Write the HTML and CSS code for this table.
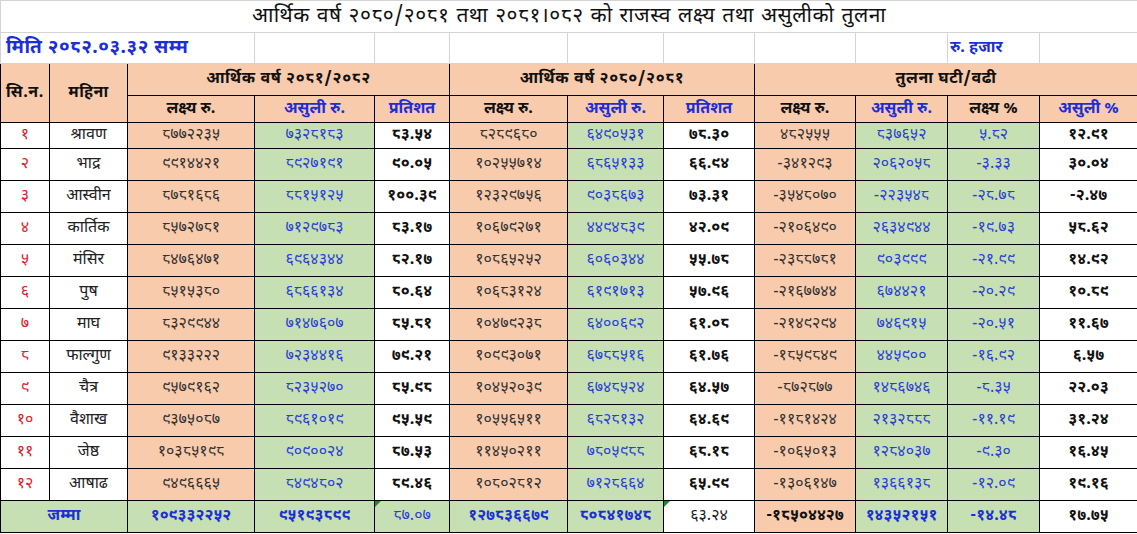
FILE: index.html
```html
<!DOCTYPE html>
<html lang="ne">
<head>
<meta charset="utf-8">
<title>राजस्व लक्ष्य तथा असुलीको तुलना</title>
<link rel="stylesheet" href="styles.css">
</head>
<body>
<table class="sheet">
  <colgroup>
    <col class="c1"><col class="c2"><col class="c3"><col class="c4"><col class="c5"><col class="c6">
    <col class="c7"><col class="c8"><col class="c9"><col class="c10"><col class="c11"><col class="c12">
  </colgroup>
  <tr class="r-title">
    <td colspan="12" class="title">आर्थिक वर्ष २०८०/२०८१ तथा २०८१।०८२ को राजस्व लक्ष्य तथा असुलीको तुलना</td>
  </tr>
  <tr class="r-date">
    <td colspan="3" class="date">मिति २०८२.०३.३२ सम्म</td>
    <td class="grid"></td><td class="grid"></td><td class="grid"></td><td class="grid"></td><td class="grid"></td>
    <td class="grid"></td><td class="grid"></td><td class="grid unit">रु. हजार</td><td class="grid"></td>
  </tr>
  <tr class="r-h1">
    <th rowspan="2" class="hd">सि.न.</th>
    <th rowspan="2" class="hd">महिना</th>
    <th colspan="3" class="hd">आर्थिक वर्ष २०८१/२०८२</th>
    <th colspan="3" class="hd">आर्थिक वर्ष २०८०/२०८१</th>
    <th colspan="4" class="hd">तुलना घटी/वढी</th>
  </tr>
  <tr class="r-h2">
    <th class="hd">लक्ष्य रु.</th><th class="hd blue">असुली रु.</th><th class="hd blue">प्रतिशत</th>
    <th class="hd">लक्ष्य रु.</th><th class="hd blue">असुली रु.</th><th class="hd blue">प्रतिशत</th>
    <th class="hd">लक्ष्य रु.</th><th class="hd blue">असुली रु.</th><th class="hd">लक्ष्य %</th><th class="hd blue">असुली %</th>
  </tr>
  <tr class="r-first">
    <td class="sn">१</td><td class="mo">श्रावण</td><td class="pe">८७७२२३५</td><td class="gr">७३२८१८३</td><td class="pc">८३.५४</td>
    <td class="pe">८२८९६८०</td><td class="gr">६४९०५३१</td><td class="pc">७८.३०</td>
    <td class="pe">४८२५५५</td><td class="gr">८३७६५२</td><td class="gr">५.८२</td><td class="pc">१२.९१</td>
  </tr>
  <tr>
    <td class="sn">२</td><td class="mo">भाद्र</td><td class="pe">९९१४४२१</td><td class="gr">८९२७१९१</td><td class="pc">९०.०५</td>
    <td class="pe">१०२५५७१४</td><td class="gr">६८६५१३३</td><td class="pc">६६.९४</td>
    <td class="pe">-३४१२९३</td><td class="gr">२०६२०५८</td><td class="gr">-३.३३</td><td class="pc">३०.०४</td>
  </tr>
  <tr>
    <td class="sn">३</td><td class="mo">आस्वीन</td><td class="pe">८७८१६८६</td><td class="gr">८८१५१२५</td><td class="pc">१००.३९</td>
    <td class="pe">१२३२९७५६</td><td class="gr">९०३८६७३</td><td class="pc">७३.३१</td>
    <td class="pe">-३५४८०७०</td><td class="gr">-२२३५४८</td><td class="gr">-२८.७८</td><td class="pc">-२.४७</td>
  </tr>
  <tr>
    <td class="sn">४</td><td class="mo">कार्तिक</td><td class="pe">८५७२७८१</td><td class="gr">७१२९७८३</td><td class="pc">८३.१७</td>
    <td class="pe">१०६७९२७१</td><td class="gr">४४९४८३९</td><td class="pc">४२.०९</td>
    <td class="pe">-२१०६४९०</td><td class="gr">२६३४९४४</td><td class="gr">-१९.७३</td><td class="pc">५८.६२</td>
  </tr>
  <tr>
    <td class="sn">५</td><td class="mo">मंसिर</td><td class="pe">८४७६४७१</td><td class="gr">६९६४३४४</td><td class="pc">८२.१७</td>
    <td class="pe">१०८६५२५२</td><td class="gr">६०६०३४४</td><td class="pc">५५.७८</td>
    <td class="pe">-२३८८७८१</td><td class="gr">९०३९९९</td><td class="gr">-२१.९९</td><td class="pc">१४.९२</td>
  </tr>
  <tr>
    <td class="sn">६</td><td class="mo">पुष</td><td class="pe">८५१५३८०</td><td class="gr">६८६६१३४</td><td class="pc">८०.६४</td>
    <td class="pe">१०६८३१२४</td><td class="gr">६१९१७१३</td><td class="pc">५७.९६</td>
    <td class="pe">-२१६७७४४</td><td class="gr">६७४४२१</td><td class="gr">-२०.२९</td><td class="pc">१०.८९</td>
  </tr>
  <tr>
    <td class="sn">७</td><td class="mo">माघ</td><td class="pe">८३२९९४४</td><td class="gr">७१४७६०७</td><td class="pc">८५.८१</td>
    <td class="pe">१०४७९२३८</td><td class="gr">६४००६९२</td><td class="pc">६१.०८</td>
    <td class="pe">-२१४९२९४</td><td class="gr">७४६९१५</td><td class="gr">-२०.५१</td><td class="pc">११.६७</td>
  </tr>
  <tr>
    <td class="sn">८</td><td class="mo">फाल्गुण</td><td class="pe">९१३३२२२</td><td class="gr">७२३४४१६</td><td class="pc">७९.२१</td>
    <td class="pe">१०९९३०७१</td><td class="gr">६७८८५१६</td><td class="pc">६१.७६</td>
    <td class="pe">-१८५९८४९</td><td class="gr">४४५९००</td><td class="gr">-१६.९२</td><td class="pc">६.५७</td>
  </tr>
  <tr>
    <td class="sn">९</td><td class="mo">चैत्र</td><td class="pe">९५७९१६२</td><td class="gr">८२३५२७०</td><td class="pc">८५.९८</td>
    <td class="pe">१०४५२०३९</td><td class="gr">६७४८५२४</td><td class="pc">६४.५७</td>
    <td class="pe">-८७२८७७</td><td class="gr">१४८६७४६</td><td class="gr">-८.३५</td><td class="pc">२२.०३</td>
  </tr>
  <tr>
    <td class="sn">१०</td><td class="mo">वैशाख</td><td class="pe">९३७५०८७</td><td class="gr">८९६१०१९</td><td class="pc">९५.५९</td>
    <td class="pe">१०५५६५११</td><td class="gr">६८२८१३२</td><td class="pc">६४.६९</td>
    <td class="pe">-११८१४२४</td><td class="gr">२१३२८८८</td><td class="gr">-११.१९</td><td class="pc">३१.२४</td>
  </tr>
  <tr>
    <td class="sn">११</td><td class="mo">जेष्ठ</td><td class="pe">१०३८५१९८</td><td class="gr">९०९००२४</td><td class="pc">८७.५३</td>
    <td class="pe">११४५०२११</td><td class="gr">७८०५९८८</td><td class="pc">६८.१८</td>
    <td class="pe">-१०६५०१३</td><td class="gr">१२८४०३७</td><td class="gr">-९.३०</td><td class="pc">१६.४५</td>
  </tr>
  <tr>
    <td class="sn">१२</td><td class="mo">आषाढ</td><td class="pe">९४९६६६५</td><td class="gr">८४९४८०२</td><td class="pc">८९.४६</td>
    <td class="pe">१०८०२८१२</td><td class="gr">७१२८६६४</td><td class="pc">६५.९९</td>
    <td class="pe">-१३०६१४७</td><td class="gr">१३६६१३८</td><td class="gr">-१२.०९</td><td class="pc">१९.१६</td>
  </tr>
  <tr class="r-total">
    <td colspan="2" class="gr tot">जम्मा</td>
    <td class="gr tot">१०९३३२२५२</td><td class="gr tot">९५१९३८९९</td><td class="gr flag">८७.०७</td>
    <td class="gr tot">१२७८३६६७९</td><td class="gr tot">८०८४१७४८</td><td class="wh flag">६३.२४</td>
    <td class="pe tot dark">-१८५०४४२७</td><td class="gr tot">१४३५२१५१</td><td class="gr tot">-१४.४८</td><td class="pc">१७.७५</td>
  </tr>
</table>
</body>
</html>
```
FILE: styles.css
```css
html, body {
  margin: 0;
  padding: 0;
  background: #ffffff;
}

body {
  font-family: "Noto Sans Devanagari", "Lohit Devanagari", "Mangal", "FreeSans", "Noto Sans", sans-serif;
  color: #1a1a1a;
}

.sheet {
  width: 1137px;
  table-layout: fixed;
  border-collapse: collapse;
}

.c1 { width: 49px; }
.c2 { width: 78px; }
.c3 { width: 127px; }
.c4 { width: 120px; }
.c5 { width: 75px; }
.c6 { width: 118px; }
.c7 { width: 96px; }
.c8 { width: 91px; }
.c9 { width: 101px; }
.c10 { width: 92px; }
.c11 { width: 92px; }
.c12 { width: 98px; }

td, th {
  padding: 0;
  border: 1px solid #000;
  text-align: center;
  vertical-align: middle;
  font-size: 16px;
  white-space: nowrap;
  overflow: hidden;
}

.r-title td, .r-date td {
  border: 1px solid #d4d4d4;
}

.r-title { height: 32px; }
.r-date { height: 31px; }
.r-h1 { height: 32px; }
.r-h2 { height: 27px; }
.r-first { height: 26px; }
tr { height: 32px; }

.title {
  font-size: 21px;
  color: #111;
  letter-spacing: 0.5px;
  word-spacing: 1px;
}

.date {
  text-align: left;
  padding-left: 5px;
  font-size: 19px;
  font-weight: 700;
  color: #1c2fd6;
  letter-spacing: 0.5px;
}

.unit {
  text-align: left;
  padding-left: 2px;
  font-size: 16px;
  font-weight: 700;
  color: #1c2fd6;
}

.hd {
  background: #f8cbad;
  font-weight: 700;
  color: #111;
}

.r-h1 .hd { letter-spacing: 0.6px; }

.hd.blue { color: #1c2fd6; }

.sn { color: #e0202a; background: #fff; }
.mo { color: #222; background: #fff; }

.pe {
  background: #f8cbad;
  color: #333;
}

.gr {
  background: #c6e0b4;
  color: #2b3fd6;
}

.pc {
  background: #fff;
  color: #111;
  font-weight: 700;
}

.wh {
  background: #fff;
  color: #222;
}

.tot {
  font-weight: 700;
  color: #1c2fd6;
}

.tot.dark { color: #111; }

.flag { position: relative; }

.flag::before {
  content: "";
  position: absolute;
  left: 0;
  top: 0;
  border-top: 6px solid #1e8a2e;
  border-right: 6px solid transparent;
}
```
